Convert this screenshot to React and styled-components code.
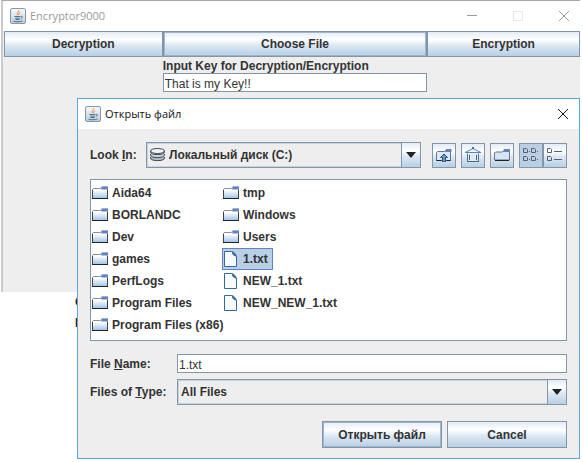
import React from "react";
import styled, { createGlobalStyle, css } from "styled-components";

const GlobalStyle = createGlobalStyle`
  *, *::before, *::after { box-sizing: border-box; }
  body {
    margin: 0;
    background: #fff;
    color: #333;
    font: bold 12px/14px "Liberation Sans", Arial, sans-serif;
  }
  button, input, select { font: inherit; color: inherit; margin: 0; border-radius: 0; outline: none; }
`;

const steel = "#8296a9";
const glossy = css`
  background: linear-gradient(#e3ecf5 0%, #ffffff 32%, #dde8f3 55%, #b8cfe5 100%);
`;

const Desktop = styled.main`
  position: relative;
  min-height: 459px;
  padding: 0 3px 0 1px;
  overflow: hidden;
`;

const MainWindow = styled.section`
  min-height: 292px;
  background: #eee;
  border-top: 1px solid #a8a8a8;
  border-left: 2px solid #cacaca;
`;

const TitleBar = styled.header`
  display: flex;
  align-items: center;
  gap: 4px;
  height: 30px;
  padding: 0 11px 0 7px;
  background: #fff;
  color: ${(p) => (p.$inactive ? "#999" : "#111")};
  font: 11px/16px "Open Sans", "Noto Sans", sans-serif;
`;

const Title = styled.h1`
  flex: 1;
  margin: 0;
  font: inherit;
`;

const WindowControl = styled.button`
  display: flex;
  padding: 0;
  border: 0;
  background: none;
  margin-left: ${(p) => (p.$spaced ? 32 : 0)}px;
`;

const ActionBar = styled.nav`
  display: grid;
  grid-template-columns: 159fr 265fr 153fr;
  padding-left: 1px;
`;

const PushButton = styled.button`
  ${glossy}
  height: ${(p) => (p.$tall ? 27 : 26)}px;
  padding: 0 4px;
  border: 1px solid ${steel};
  box-shadow: ${(p) => (p.$focused ? "inset 0 0 0 1px #9fb5ca" : "none")};
`;

const KeyForm = styled.div`
  display: grid;
  grid-template-columns: 159fr 265fr 153fr;
  padding: 2px 0 0 1px;
`;

const KeyField = styled.div`
  grid-column: 2;
  display: flex;
  flex-direction: column;
`;

const TextField = styled.input`
  width: 100%;
  min-width: 0;
  height: 19px;
  padding: 2px 1px 0;
  border: 1px solid ${steel};
  background: #fff;
  font-weight: normal;
`;

const Backdrop = styled.div`
  padding: 0 0 0 74px;
  color: #222;
  line-height: 21px;
`;

const Dialog = styled.section`
  position: absolute;
  top: 98px;
  left: 77px;
  right: 3px;
  border: 1px solid #58a6e2;
  background: #eee;
`;

const DialogBody = styled.div`
  display: flex;
  flex-direction: column;
  padding: 13px 12px 10px;
`;

const LookInRow = styled.div`
  display: flex;
  align-items: center;
`;

const LookInLabel = styled.label`
  width: 56px;
`;

const ComboBox = styled.div`
  display: flex;
  align-items: center;
  flex: 1;
  min-width: 0;
  height: 26px;
  border: 1px solid ${steel};
  box-shadow: inset 0 0 0 1px #c3d3e3;
  padding-left: 3px;
`;

const ComboSelect = styled.select`
  appearance: none;
  flex: 1;
  min-width: 0;
  height: 22px;
  padding: 0 0 0 ${(p) => (p.$icon ? 3 : 0)}px;
  border: 0;
  background: transparent;
`;

const ComboArrow = styled.span`
  ${glossy}
  display: flex;
  align-items: center;
  justify-content: center;
  width: 19px;
  height: 24px;
  border-left: 1px solid ${steel};
  pointer-events: none;
`;

const ToolStrip = styled.div`
  display: flex;
  gap: 5px;
  padding-left: 11px;
`;

const ViewToggle = styled.div`
  display: flex;
`;

const ToolButton = styled.button`
  ${glossy}
  display: flex;
  align-items: center;
  justify-content: center;
  width: 24px;
  height: 25px;
  padding: 0;
  border: 1px solid ${steel};
  ${(p) => p["aria-pressed"] && "background: #b8cfe5;"}
`;

const FileList = styled.ul`
  display: grid;
  grid-template-rows: repeat(7, 22px);
  grid-auto-flow: column;
  grid-auto-columns: 131px;
  justify-items: start;
  height: 162px;
  margin: 11px 0 13px;
  padding: 2px 0 0;
  border: 1px solid ${steel};
  background: #fff;
  list-style: none;
`;

const FileItem = styled.li`
  display: flex;
  align-items: center;
  gap: 4px;
  padding: 0 ${(p) => (p["aria-selected"] ? 4 : 0)}px 0 0;
  height: 22px;
  border: 1px solid transparent;
  white-space: nowrap;
  ${(p) => p["aria-selected"] && "background: #b8cfe5; border-color: #6382bf;"}
`;

const Fields = styled.div`
  display: grid;
  grid-template-columns: 87px 1fr;
  align-items: center;
  row-gap: 6px;
`;

const Actions = styled.footer`
  display: grid;
  grid-template-columns: 120px 120px;
  justify-content: end;
  gap: 5px;
  padding-top: 16px;
`;

const JavaIcon = () => (
  <svg width="16" height="16" viewBox="0 0 16 16" fill="none" aria-hidden="true">
    <defs>
      <linearGradient id="java-tile" x2="0" y2="1">
        <stop stopColor="#f8fafc" />
        <stop offset="1" stopColor="#bccbd8" />
      </linearGradient>
    </defs>
    <rect x=".5" y=".5" width="15" height="15" rx="1.5" fill="url(#java-tile)" stroke="#8799a8" />
    <path d="M8.6 2c1 1.5-2.8 2.5-.7 5M10.3 4.3C8.5 5.2 8.4 6 9 7.2" stroke="#e8874a" />
    <path d="M4.5 8.5h6M5.2 10.2h4.6M5.5 11.5h4M3.5 13.2c3 .8 6 .7 9-.2M11 8.5c2-.5 2 1.6-.3 2" stroke="#4c7595" />
  </svg>
);

const CloseIcon = () => (
  <svg width="10" height="10" viewBox="0 0 10 10" fill="none" stroke="currentColor" aria-hidden="true">
    <path d="M0 0l10 10M10 0L0 10" />
  </svg>
);

const FolderIcon = () => (
  <svg width="16" height="14" viewBox="0 0 16 14" fill="none" aria-hidden="true">
    <defs>
      <linearGradient id="folder-fill" x2="0" y2="1">
        <stop offset=".3" stopColor="#fff" />
        <stop offset="1" stopColor="#9cc3e6" />
      </linearGradient>
    </defs>
    <path d="M.5 12.5v-9l1-1h7l2-2h5v12z" fill="url(#folder-fill)" />
    <path d="M.5 12.5v-9M15.5 3.500v9" stroke="#3c4248" />
    <path d="M1 2.500h7.500l1.500-2" stroke="#888f96" />
    <path d="M0 12.500h16" stroke="#222" />
    <path d="M10 .5h6v3H9z" fill="#6382bf" />
    <path d="M11 .5h5" stroke="#95b2df" />
  </svg>
);

const FileIcon = () => (
  <svg width="16" height="16" viewBox="0 0 16 16" fill="none" stroke="#35699e" aria-hidden="true">
    <path d="M1.500.5h7l5 5v10h-12z" fill="#f8fbff" />
    <path d="M8.500.5l2 .5 2.500 3v2M9 2l3 3" />
    <path d="M9.500 3.500l1 1" stroke="#8eb9df" />
  </svg>
);

const DiskIcon = () => (
  <svg width="16" height="14" viewBox="0 0 16 14" stroke="#3f454b" aria-hidden="true">
    <path d="M.5 9v1c0 3.500 14 3.500 14 0V9" fill="#aebdcc" />
    <path d="M.5 6v1c0 3.500 14 3.500 14 0V6" fill="#cbd6e0" />
    <path d="M.5 3v1c0 3.500 14 3.500 14 0V3" fill="#dfe6ed" />
    <ellipse cx="7.500" cy="3" rx="7" ry="2.500" fill="#eef3f8" />
  </svg>
);

const ArrowIcon = () => (
  <svg width="10" height="6" viewBox="0 0 10 6" aria-hidden="true">
    <path d="M0 0h10L5 6z" fill="#222" />
  </svg>
);

const UpIcon = () => (
  <svg width="16" height="14" viewBox="0 0 16 14" fill="none" aria-hidden="true">
    <path d="M.5 12.500v-8l1-1h7l2-2h4v11z" fill="#dbe9f6" stroke="#647789" />
    <path d="M10 1h5.500v3H9z" fill="#6382bf" />
    <path d="M.5 12.500h5M10.500 12.500h4" stroke="#222" />
    <path d="M4.500 9.500L8 6l3.500 3.500H9.500V14h-3V9.500z" fill="#5d9bd0" stroke="#2d5277" />
  </svg>
);

const HomeIcon = () => (
  <svg width="18" height="16" viewBox="0 0 18 16" fill="none" aria-hidden="true">
    <path d="M3.500 6.500v8h11v-8" fill="#deeaf5" stroke="#48729d" />
    <path d="M1 5.500l8-4 8 4z" fill="#eef5fb" stroke="#5985b3" />
    <path d="M8 0h2v2H8z" fill="#3c6ca4" />
    <path d="M3 14.500h12M5.500 8v5M12.500 8v5" stroke="#59616a" />
  </svg>
);

const NewFolderIcon = () => (
  <svg width="16" height="14" viewBox="0 0 16 14" fill="none" aria-hidden="true">
    <path d="M.5 12v-7l1-1h7l2-2h5v10z" fill="#d6e5f3" stroke="#697580" />
    <path d="M1 12.500h14" stroke="#222" />
    <path d="M10 1h6v3h-7z" fill="#6382bf" />
  </svg>
);

const ListIcon = () => (
  <svg width="16" height="16" viewBox="0 0 16 16" fill="none" stroke="#59616a" aria-hidden="true">
    <path d="M.5 1.500h3l1 1v3h-4zM8.500 1.500h3l1 1v3h-4zM.5 9.500h3l1 1v3h-4zM8.500 9.500h3l1 1v3h-4z" />
    <path d="M6 4.500h1M14 4.500h1M6 12.500h1M14 12.500h1" />
  </svg>
);

const DetailsIcon = () => (
  <svg width="16" height="16" viewBox="0 0 16 16" fill="none" stroke="#59616a" aria-hidden="true">
    <path d="M.5 1.500h3l1 1v3h-4zM.5 9.500h3l1 1v3h-4zM7 4.500h8M7 12.500h8" />
  </svg>
);

const files = [
  "Aida64", "BORLANDC", "Dev", "games", "PerfLogs", "Program Files", "Program Files (x86)",
  "tmp", "Windows", "Users", "1.txt", "NEW_1.txt", "NEW_NEW_1.txt",
];

export default function App() {
  return (
    <Desktop>
      <GlobalStyle />
      <MainWindow>
        <TitleBar $inactive>
          <JavaIcon />
          <Title>Encryptor9000</Title>
          <WindowControl aria-label="Minimize">
            <svg width="10" height="10" stroke="#999" aria-hidden="true"><path d="M0 4.500h10" /></svg>
          </WindowControl>
          <WindowControl $spaced aria-label="Maximize" disabled>
            <svg width="10" height="10" fill="none" stroke="#e6e6e6" aria-hidden="true"><path d="M.5.5h9v9h-9z" /></svg>
          </WindowControl>
          <WindowControl $spaced aria-label="Close"><CloseIcon /></WindowControl>
        </TitleBar>
        <ActionBar>
          <PushButton>Decryption</PushButton>
          <PushButton $focused>Choose File</PushButton>
          <PushButton>Encryption</PushButton>
        </ActionBar>
        <KeyForm>
          <KeyField>
            <label htmlFor="key">Input Key for Decryption/Encryption</label>
            <TextField id="key" defaultValue="That is my Key!!" />
          </KeyField>
        </KeyForm>
      </MainWindow>
      <Backdrop aria-hidden="true">
        <div>C</div>
        <div>L</div>
      </Backdrop>
      <Dialog role="dialog" aria-label="Открыть файл">
        <TitleBar>
          <JavaIcon />
          <Title as="h2">Открыть файл</Title>
          <WindowControl aria-label="Close"><CloseIcon /></WindowControl>
        </TitleBar>
        <DialogBody>
          <LookInRow>
            <LookInLabel htmlFor="look">Look <u>I</u>n:</LookInLabel>
            <ComboBox>
              <DiskIcon />
              <ComboSelect id="look" $icon><option>Локальный диск (C:)</option></ComboSelect>
              <ComboArrow><ArrowIcon /></ComboArrow>
            </ComboBox>
            <ToolStrip>
              <ToolButton aria-label="Up One Level"><UpIcon /></ToolButton>
              <ToolButton aria-label="Home"><HomeIcon /></ToolButton>
              <ToolButton aria-label="Create New Folder"><NewFolderIcon /></ToolButton>
              <ViewToggle>
                <ToolButton aria-label="List" aria-pressed={true}><ListIcon /></ToolButton>
                <ToolButton aria-label="Details" aria-pressed={false}><DetailsIcon /></ToolButton>
              </ViewToggle>
            </ToolStrip>
          </LookInRow>
          <FileList role="listbox" aria-label="Files">
            {files.map((name) => (
              <FileItem key={name} role="option" aria-selected={name === "1.txt"}>
                {name.endsWith(".txt") ? <FileIcon /> : <FolderIcon />}
                {name}
              </FileItem>
            ))}
          </FileList>
          <Fields>
            <label htmlFor="name">File <u>N</u>ame:</label>
            <TextField id="name" defaultValue="1.txt" />
            <label htmlFor="type">Files of <u>T</u>ype:</label>
            <ComboBox>
              <ComboSelect id="type"><option>All Files</option></ComboSelect>
              <ComboArrow><ArrowIcon /></ComboArrow>
            </ComboBox>
          </Fields>
          <Actions>
            <PushButton $tall $focused>Открыть файл</PushButton>
            <PushButton $tall>Cancel</PushButton>
          </Actions>
        </DialogBody>
      </Dialog>
    </Desktop>
  );
}
